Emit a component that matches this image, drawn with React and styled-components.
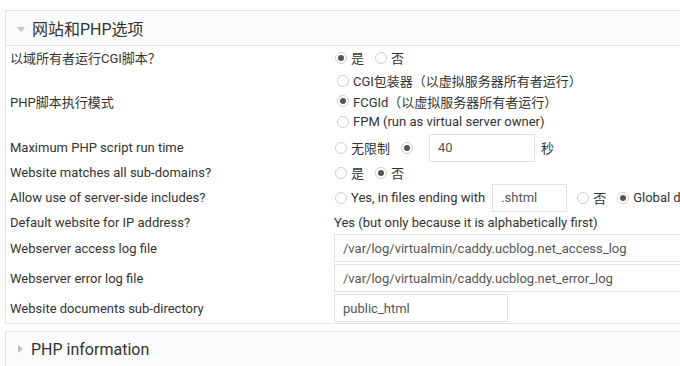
import React from 'react';
import styled, { createGlobalStyle } from 'styled-components';

const Global = createGlobalStyle`
  html, body { margin: 0; padding: 0; background: #fff; overflow: hidden; }
  body {
    font-family: Roboto, "Noto Sans CJK SC", sans-serif;
    font-size: 13px;
    color: #333;
    width: 680px;
    height: 366px;
  }
`;

const Page = styled.div`
  padding: 10px 0 0 5px;
  width: 760px;
  display: flex;
  flex-direction: column;
  gap: 7px;
`;

const Panel = styled.section`
  border: 1px solid #e4e4e4;
  background: #fff;
`;

const PanelHead = styled.div`
  height: 34px;
  background: #fafbfb;
  display: flex;
  align-items: center;
  padding-left: 11px;
  gap: 7px;
  font-size: 16px;
  color: #333;
  border-bottom: ${p => (p.$open ? '1px solid #e4e4e4' : 'none')};
`;

const Caret = styled.span`
  width: 0;
  height: 0;
  display: inline-block;
  ${p =>
    p.$open
      ? `border-left: 4px solid transparent; border-right: 4px solid transparent; border-top: 5px solid #c4c4c4; margin-top: 2px;`
      : `border-top: 4px solid transparent; border-bottom: 4px solid transparent; border-left: 5px solid #c4c4c4; margin: 0 1px 0 1px;`}
`;

const Row = styled.div`
  display: grid;
  grid-template-columns: 325px 1fr;
  align-items: center;
  height: ${p => p.$h}px;
`;

const Label = styled.div`
  padding-left: 4px;
  color: #333;
  white-space: nowrap;
`;

const Value = styled.div`
  padding-left: 3px;
  display: flex;
  align-items: center;
  white-space: nowrap;
`;

const Stack = styled.div`
  display: flex;
  flex-direction: column;
`;

const Option = styled.span`
  display: inline-flex;
  align-items: center;
  height: ${p => (p.$line ? '20.5px' : 'auto')};
  margin-right: ${p => (p.$tight ? 0 : 10)}px;
  margin-left: ${p => (p.$indent ? 2 : 0)}px;
`;

const Radio = styled.span`
  width: 12px;
  height: 12px;
  box-sizing: border-box;
  border-radius: 50%;
  border: 1px solid #cfcfcf;
  background: #fff;
  margin: 0 4px 0 1px;
  position: relative;
  flex: none;
  &::after {
    content: '';
    display: ${p => (p.$on ? 'block' : 'none')};
    position: absolute;
    width: 6px;
    height: 6px;
    border-radius: 50%;
    background: #555;
    left: 2px;
    top: 2px;
  }
`;

const Field = styled.input`
  box-sizing: border-box;
  width: ${p => p.$w}px;
  height: 28px;
  border: 1px solid #e2e2e2;
  border-radius: 0;
  padding: 0 8px;
  margin: 0 ${p => p.$mr || 0}px 0 ${p => p.$ml || 0}px;
  font-family: Roboto, "Noto Sans CJK SC", sans-serif;
  font-size: 13px;
  color: #555;
  background: #fff;
  outline: none;
`;

const Unit = styled.span`
  color: #333;
`;

const Choice = ({ on, children, tight, line, indent }) => (
  <Option $tight={tight} $line={line} $indent={indent}>
    <Radio $on={on} />
    {children}
  </Option>
);

export default function App() {
  return (
    <>
      <Global />
      <Page>
        <Panel>
          <PanelHead $open>
            <Caret $open />
            网站和PHP选项
          </PanelHead>

          <Row $h={23}>
            <Label>以域所有者运行CGI脚本？</Label>
            <Value>
              <Choice on>是</Choice>
              <Choice>否</Choice>
            </Value>
          </Row>

          <Row $h={64}>
            <Label>PHP脚本执行模式</Label>
            <Stack>
              <Value>
                <Choice line indent>CGI包装器（以虚拟服务器所有者运行）</Choice>
              </Value>
              <Value>
                <Choice line indent on>FCGId（以虚拟服务器所有者运行）</Choice>
              </Value>
              <Value>
                <Choice line indent>FPM (run as virtual server owner)</Choice>
              </Value>
            </Stack>
          </Row>

          <Row $h={29}>
            <Label>Maximum PHP script run time</Label>
            <Value>
              <Choice>无限制</Choice>
              <Choice on tight />
              <Field $w={106} $ml={12} $mr={6} value="40" readOnly />
              <Unit>秒</Unit>
            </Value>
          </Row>

          <Row $h={21}>
            <Label>Website matches all sub-domains?</Label>
            <Value>
              <Choice>是</Choice>
              <Choice on>否</Choice>
            </Value>
          </Row>

          <Row $h={29}>
            <Label>Allow use of server-side includes?</Label>
            <Value>
              <Choice tight>Yes, in files ending with</Choice>
              <Field $w={75} $ml={7} $mr={9} value=".shtml" readOnly />
              <Choice>否</Choice>
              <Choice on>Global default</Choice>
            </Value>
          </Row>

          <Row $h={21}>
            <Label>Default website for IP address?</Label>
            <Value>Yes (but only because it is alphabetically first)</Value>
          </Row>

          <Row $h={30}>
            <Label>Webserver access log file</Label>
            <Value>
              <Field $w={400} value="/var/log/virtualmin/caddy.ucblog.net_access_log" readOnly />
            </Value>
          </Row>

          <Row $h={30}>
            <Label>Webserver error log file</Label>
            <Value>
              <Field $w={400} value="/var/log/virtualmin/caddy.ucblog.net_error_log" readOnly />
            </Value>
          </Row>

          <Row $h={30}>
            <Label>Website documents sub-directory</Label>
            <Value>
              <Field $w={174} value="public_html" readOnly />
            </Value>
          </Row>
        </Panel>

        <Panel>
          <PanelHead>
            <Caret />
            PHP information
          </PanelHead>
        </Panel>
      </Page>
    </>
  );
}
